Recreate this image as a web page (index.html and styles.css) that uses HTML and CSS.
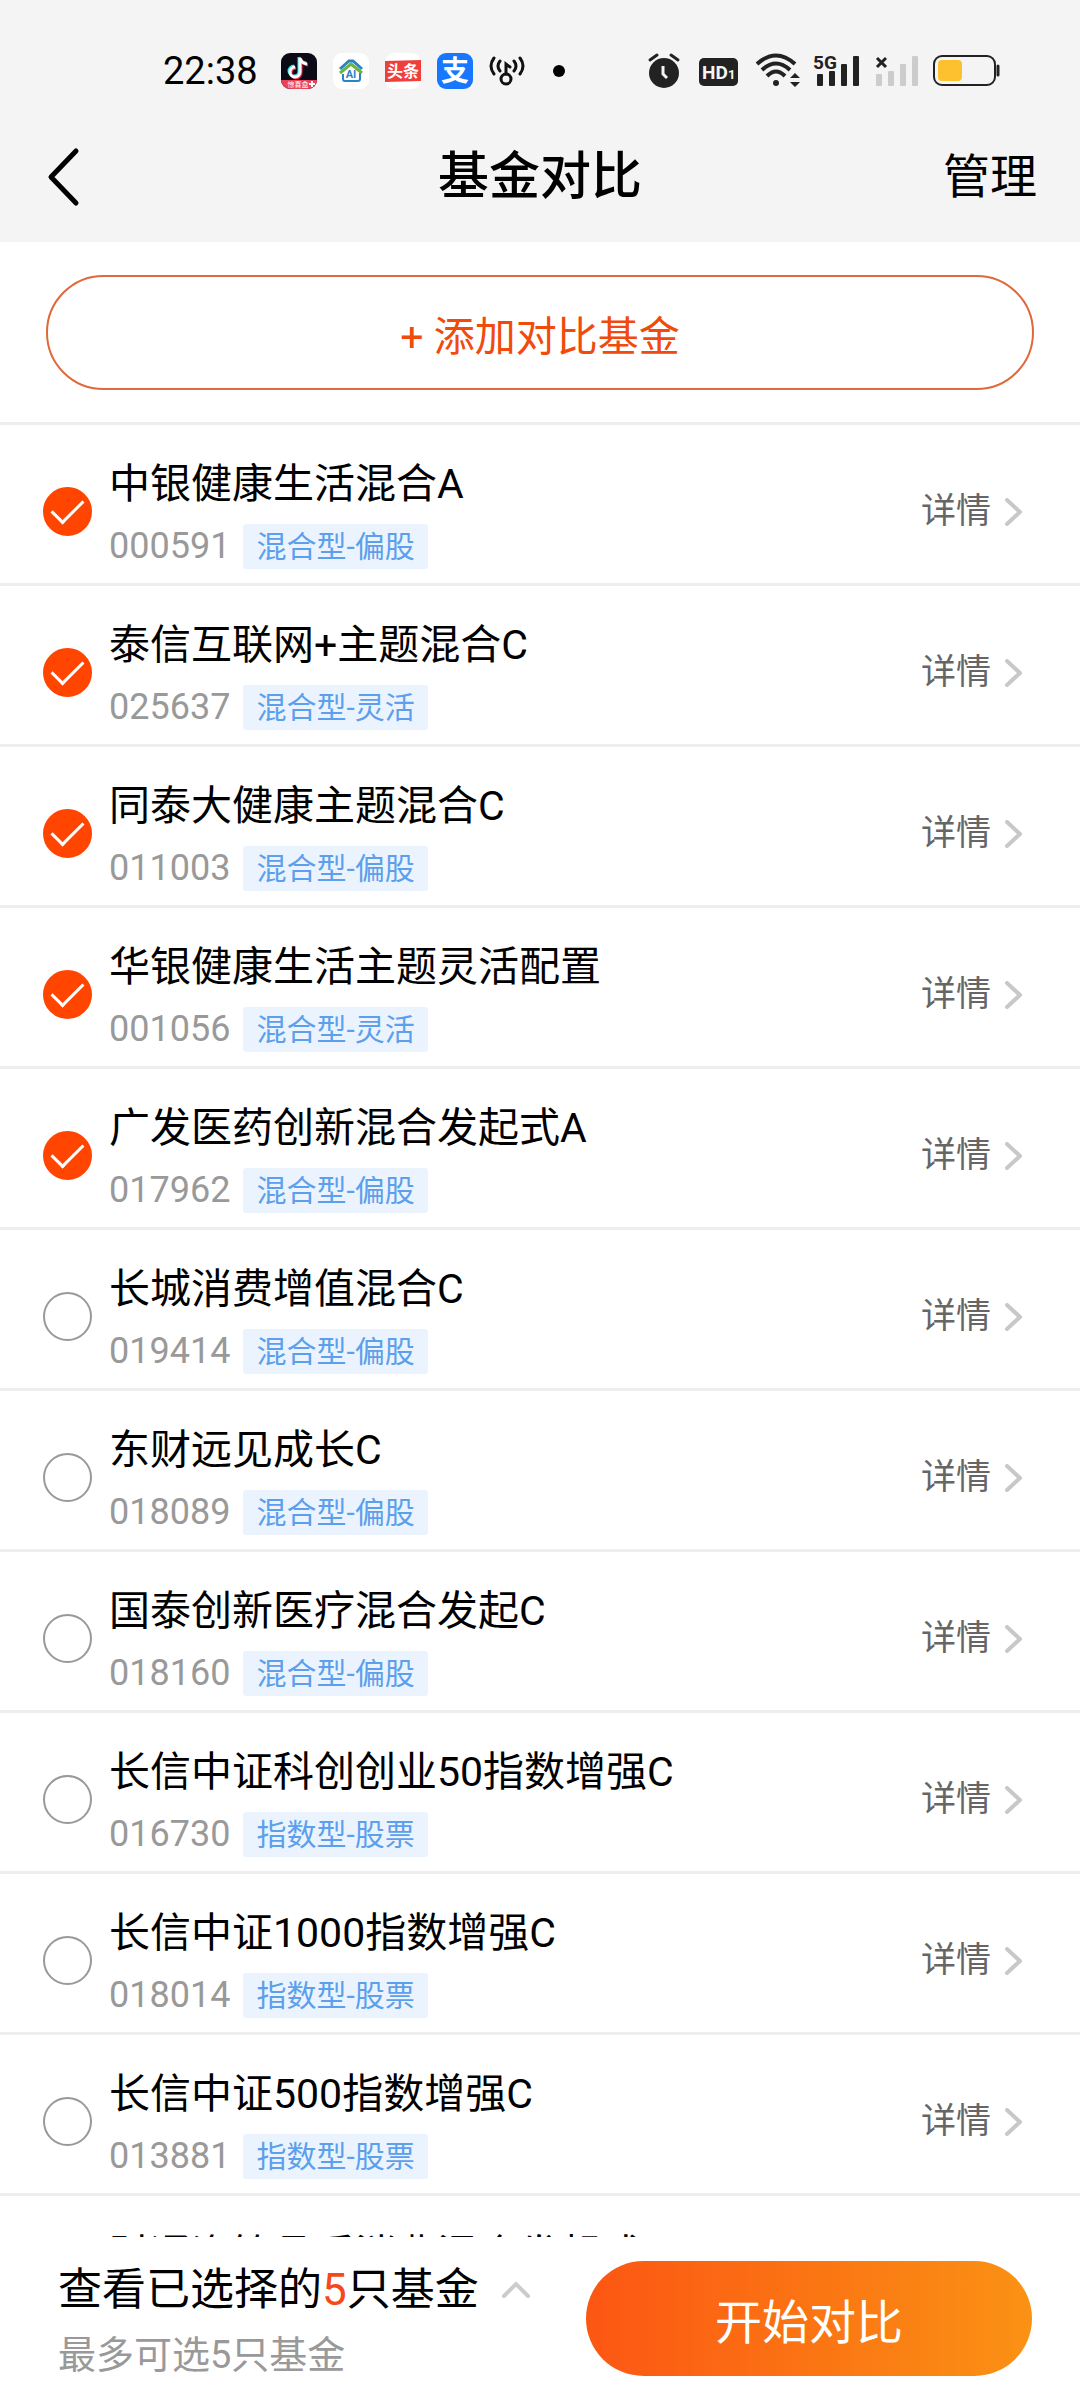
FILE: index.html
```html
<!DOCTYPE html>
<html lang="zh-CN">
<head>
    <meta charset="UTF-8">
    <meta name="viewport" content="width=device-width, initial-scale=1.0">
    <title>基金对比</title>
    <link rel="stylesheet" href="styles.css">
</head>
<body>
    <!-- shared arrow -->
    <svg class="sprite" aria-hidden="true">
        <symbol id="arrow" viewBox="0 0 18 28">
            <path d="M2 2 L15 14 L2 26" fill="none" stroke="#c8c8c8" stroke-width="4" stroke-linecap="round" stroke-linejoin="round"/>
        </symbol>
    </svg>

    <header class="top">
        <div class="status-bar">
            <div class="status-left">
                <span class="clock">22:38</span>
                <svg width="36" height="36" viewBox="0 0 36 36">
                    <clipPath id="app"><rect width="36" height="36" rx="9"/></clipPath>
                    <g clip-path="url(#app)">
                        <rect width="36" height="36" fill="#0c0a17"/>
                        <g fill="none" stroke-width="3">
                            <path d="M18 4 V18 A5 5 0 1 1 13 13 M18 4 Q19 9 25 10" stroke="#25e5e0"/>
                            <path d="M20 6 V20 A5 5 0 1 1 15 15 M20 6 Q21 11 27 12" stroke="#fa2c58"/>
                            <path d="M19 5 V19 A5 5 0 1 1 14 14 M19 5 Q20 10 26 11" stroke="#fff"/>
                        </g>
                        <path d="M0 27 H36 V36 H0 Z" fill="#e8415a"/>
                        <text x="17" y="34" class="ribbon">惊喜盒</text>
                        <path d="M31 28 V34 M28 31 H34" stroke="#fff" stroke-width="2"/>
                    </g>
                </svg>
                <svg width="36" height="36" viewBox="0 0 36 36">
                    <rect width="36" height="36" rx="9" fill="#fff"/>
                    <path d="M7 16 L16 8 L20 8 L29 16" fill="none" stroke="#2b83c6" stroke-width="3"/>
                    <path d="M7 20 L18 11 L29 20" fill="none" stroke="#6cb33f" stroke-width="3"/>
                    <path d="M10 21 V26 Q10 28 12 28 H25 Q27 28 27 26 V20" fill="none" stroke="#2b83c6" stroke-width="2"/>
                    <text x="18" y="25" class="ai">AI</text>
                </svg>
                <svg width="36" height="36" viewBox="0 0 36 36">
                    <rect width="36" height="36" rx="9" fill="#fff"/>
                    <path d="M0 8 L36 7 V28 L0 29 Z" fill="#ee3f3d"/>
                    <text x="18" y="24" class="toutiao">头条</text>
                </svg>
                <svg width="36" height="36" viewBox="0 0 36 36">
                    <rect width="36" height="36" rx="9" fill="#1777ff"/>
                    <text x="18" y="28" class="alipay">支</text>
                </svg>
                <svg width="36" height="36" viewBox="0 0 36 36" fill="none" stroke="#111" stroke-width="3" stroke-linecap="round">
                    <path d="M5 5 Q-1 13 5 21 M11 8 Q7 13 11 18 M31 5 Q37 13 31 21 M25 8 Q29 13 25 18"/>
                    <circle cx="17" cy="26" r="5"/>
                    <path d="M17 21 V11 L21 14"/>
                </svg>
                <svg width="36" height="36" viewBox="0 0 36 36"><circle cx="18" cy="18" r="6" fill="#000"/></svg>
            </div>
            <div class="status-right">
                <svg width="35" height="36" viewBox="0 0 35 36">
                    <circle cx="16" cy="20" r="15" fill="#222"/>
                    <path d="M2 7 L9 2 M30 7 L23 2" stroke="#222" stroke-width="3" stroke-linecap="round"/>
                    <path d="M15 13 V21 L19 25" fill="none" stroke="#f4f4f4" stroke-width="3"/>
                </svg>
                <svg width="41" height="36" viewBox="0 0 41 36">
                    <rect y="5" width="39" height="28" rx="5" fill="#222"/>
                    <text x="3" y="26" class="hd">HD</text>
                    <text x="29" y="26" class="hd-sub">1</text>
                </svg>
                <svg width="42" height="36" viewBox="0 0 42 36">
                    <g fill="none" stroke="#222" stroke-width="4">
                        <path d="M1 11 Q20 -6 39 11"/>
                        <path d="M6 17 Q20 4 34 17"/>
                        <path d="M11 23 Q20 14 29 23"/>
                    </g>
                    <circle cx="20" cy="30" r="3" fill="#222"/>
                    <path d="M34 25 L39 20 L44 25 Z M34 29 L39 34 L44 29 Z" fill="#222"/>
                </svg>
                <svg width="45" height="36" viewBox="0 0 45 36">
                    <text x="-1" y="16" class="net">5G</text>
                    <g fill="#222">
                        <rect x="3" y="21" width="6" height="12" rx="1"/>
                        <rect x="15" y="18" width="6" height="15" rx="1"/>
                        <rect x="27" y="11" width="6" height="22" rx="1"/>
                        <rect x="39" y="3" width="6" height="30" rx="1"/>
                    </g>
                </svg>
                <svg width="42" height="36" viewBox="0 0 42 36">
                    <path d="M2 5 L11 14 M11 5 L2 14" stroke="#222" stroke-width="3"/>
                    <g fill="#ccc">
                        <rect x="1" y="21" width="6" height="12" rx="1"/>
                        <rect x="13" y="18" width="6" height="15" rx="1"/>
                        <rect x="25" y="11" width="6" height="22" rx="1"/>
                        <rect x="37" y="3" width="6" height="30" rx="1"/>
                    </g>
                </svg>
                <svg width="67" height="36" viewBox="0 0 67 36">
                    <rect x="1" y="3" width="61" height="29" rx="8" fill="none" stroke="#222" stroke-width="2"/>
                    <rect x="5" y="7" width="24" height="21" rx="4" fill="#fdc02f"/>
                    <path d="M65 13 V22" stroke="#222" stroke-width="3" stroke-linecap="round"/>
                </svg>
            </div>
        </div>
        <nav class="nav">
            <button class="back" aria-label="返回">
                <svg width="32" height="58" viewBox="0 0 32 58">
                    <path d="M29 3 L4 29 L29 55" fill="none" stroke="#000" stroke-width="5" stroke-linecap="round" stroke-linejoin="round"/>
                </svg>
            </button>
            <h1>基金对比</h1>
            <button class="manage">管理</button>
        </nav>
    </header>

    <main class="content">
        <div class="add-wrap">
            <button class="add">+ 添加对比基金</button>
        </div>
        <ul class="funds">
            <li class="fund">
                <input type="checkbox" id="f1" checked>
                <label for="f1"><span class="name">中银健康生活混合A</span><span class="meta"><span class="code">000591</span><span class="tag">混合型-偏股</span></span></label>
                <a href="#">详情<svg class="arrow"><use href="#arrow"/></svg></a>
            </li>
            <li class="fund">
                <input type="checkbox" id="f2" checked>
                <label for="f2"><span class="name">泰信互联网+主题混合C</span><span class="meta"><span class="code">025637</span><span class="tag">混合型-灵活</span></span></label>
                <a href="#">详情<svg class="arrow"><use href="#arrow"/></svg></a>
            </li>
            <li class="fund">
                <input type="checkbox" id="f3" checked>
                <label for="f3"><span class="name">同泰大健康主题混合C</span><span class="meta"><span class="code">011003</span><span class="tag">混合型-偏股</span></span></label>
                <a href="#">详情<svg class="arrow"><use href="#arrow"/></svg></a>
            </li>
            <li class="fund">
                <input type="checkbox" id="f4" checked>
                <label for="f4"><span class="name">华银健康生活主题灵活配置</span><span class="meta"><span class="code">001056</span><span class="tag">混合型-灵活</span></span></label>
                <a href="#">详情<svg class="arrow"><use href="#arrow"/></svg></a>
            </li>
            <li class="fund">
                <input type="checkbox" id="f5" checked>
                <label for="f5"><span class="name">广发医药创新混合发起式A</span><span class="meta"><span class="code">017962</span><span class="tag">混合型-偏股</span></span></label>
                <a href="#">详情<svg class="arrow"><use href="#arrow"/></svg></a>
            </li>
            <li class="fund">
                <input type="checkbox" id="f6">
                <label for="f6"><span class="name">长城消费增值混合C</span><span class="meta"><span class="code">019414</span><span class="tag">混合型-偏股</span></span></label>
                <a href="#">详情<svg class="arrow"><use href="#arrow"/></svg></a>
            </li>
            <li class="fund">
                <input type="checkbox" id="f7">
                <label for="f7"><span class="name">东财远见成长C</span><span class="meta"><span class="code">018089</span><span class="tag">混合型-偏股</span></span></label>
                <a href="#">详情<svg class="arrow"><use href="#arrow"/></svg></a>
            </li>
            <li class="fund">
                <input type="checkbox" id="f8">
                <label for="f8"><span class="name">国泰创新医疗混合发起C</span><span class="meta"><span class="code">018160</span><span class="tag">混合型-偏股</span></span></label>
                <a href="#">详情<svg class="arrow"><use href="#arrow"/></svg></a>
            </li>
            <li class="fund">
                <input type="checkbox" id="f9">
                <label for="f9"><span class="name">长信中证科创创业50指数增强C</span><span class="meta"><span class="code">016730</span><span class="tag">指数型-股票</span></span></label>
                <a href="#">详情<svg class="arrow"><use href="#arrow"/></svg></a>
            </li>
            <li class="fund">
                <input type="checkbox" id="f10">
                <label for="f10"><span class="name">长信中证1000指数增强C</span><span class="meta"><span class="code">018014</span><span class="tag">指数型-股票</span></span></label>
                <a href="#">详情<svg class="arrow"><use href="#arrow"/></svg></a>
            </li>
            <li class="fund">
                <input type="checkbox" id="f11">
                <label for="f11"><span class="name">长信中证500指数增强C</span><span class="meta"><span class="code">013881</span><span class="tag">指数型-股票</span></span></label>
                <a href="#">详情<svg class="arrow"><use href="#arrow"/></svg></a>
            </li>
            <li class="fund">
                <input type="checkbox" id="f12">
                <label for="f12"><span class="name">财通资管品质消费混合发起式</span></label>
            </li>
        </ul>
    </main>

    <footer class="bottom">
        <div class="summary">
            <button class="selected">查看已选择的<em>5</em>只基金
                <svg width="30" height="18" viewBox="0 0 30 18"><path d="M3 15 L15 3 L27 15" fill="none" stroke="#ccc" stroke-width="4" stroke-linecap="round"/></svg>
            </button>
            <p>最多可选5只基金</p>
        </div>
        <button class="start">开始对比</button>
    </footer>
</body>
</html>
```

FILE: styles.css
```css
* {
    box-sizing: border-box;
}
body {
    margin: 0;
    height: 100vh;
    display: flex;
    flex-direction: column;
    overflow: hidden;
    background: #fff;
    color: #000;
    font-family: Roboto, "Noto Sans CJK SC", sans-serif;
}
button {
    padding: 0;
    border: none;
    background: none;
    color: inherit;
    font-family: inherit;
    cursor: pointer;
}
svg {
    display: block;
    flex: none;
    overflow: visible;
}
.sprite {
    position: absolute;
    width: 0;
    height: 0;
}

/* header */
.top {
    background: #f4f4f4;
}
.status-bar {
    display: flex;
    justify-content: space-between;
    padding: 53px 80px 0 163px;
}
.status-left,
.status-right {
    display: flex;
    align-items: center;
    gap: 16px;
}
.clock {
    width: 102px;
    font-size: 38px;
    line-height: 36px;
}
.ribbon {
    font-size: 7px;
    fill: #fff;
    text-anchor: middle;
}
.ai {
    font-size: 11px;
    font-weight: bold;
    fill: #2b83c6;
    text-anchor: middle;
}
.toutiao {
    font-size: 16px;
    font-weight: bold;
    fill: #fff;
    text-anchor: middle;
}
.alipay {
    font-size: 28px;
    font-weight: bold;
    fill: #fff;
    text-anchor: middle;
}
.hd {
    font-size: 19px;
    font-weight: bold;
    fill: #f4f4f4;
}
.hd-sub {
    font-size: 13px;
    font-weight: bold;
    fill: #f4f4f4;
}
.net {
    font-size: 19px;
    font-weight: bold;
    fill: #222;
}
.nav {
    display: flex;
    align-items: center;
    justify-content: space-between;
    height: 153px;
    padding: 22px 43px 0 47px;
}
.back {
    width: 90px;
}
.nav h1 {
    margin: 0;
    font-size: 51px;
    line-height: 60px;
    font-weight: 500;
}
.manage {
    font-size: 47px;
    line-height: 60px;
}

/* list */
.content {
    flex: 1;
    min-height: 0;
    overflow: hidden;
}
.add-wrap {
    padding: 33px 46px 32px;
}
.add {
    width: 100%;
    height: 115px;
    border: 2px solid #e0683a;
    border-radius: 58px;
    color: #f04a0c;
    font-size: 41px;
}
.funds {
    margin: 0;
    padding: 0;
    list-style: none;
}
.fund {
    display: flex;
    align-items: center;
    padding: 29px 57px 14px 43px;
    border-top: 3px solid #eee;
}
.fund input {
    appearance: none;
    display: grid;
    place-content: center;
    width: 49px;
    height: 49px;
    margin: 0 17px 0 0;
    border: 2px solid #999;
    border-radius: 50%;
}
.fund input:checked {
    border-color: #ff4500;
    background: #ff4500;
}
.fund input:checked::after {
    content: "";
    width: 28px;
    height: 14px;
    margin-bottom: 8px;
    border: solid #fff;
    border-width: 0 0 3px 3px;
    transform: rotate(-45deg);
}
.fund label {
    flex: 1;
    min-height: 115px;
}
.name {
    display: block;
    font-size: 41px;
    line-height: 60px;
}
.meta {
    display: flex;
    align-items: center;
    gap: 13px;
    margin-top: 10px;
}
.code {
    color: #999;
    font-size: 36px;
    line-height: 45px;
}
.tag {
    padding: 0 13px;
    border-radius: 3px;
    background: #ebf4fe;
    color: #5c9fec;
    font-size: 30px;
    line-height: 45px;
}
.fund a {
    display: flex;
    align-items: center;
    gap: 14px;
    color: #666;
    font-size: 35px;
    line-height: 45px;
    text-decoration: none;
}
.arrow {
    width: 18px;
    height: 28px;
}

/* bottom bar */
.bottom {
    display: flex;
    align-items: center;
    justify-content: space-between;
    height: 163px;
    padding: 0 48px 0 58px;
    background: #fff;
}
.summary {
    padding-top: 5px;
}
.selected {
    display: flex;
    align-items: center;
    font-size: 44px;
    line-height: 64px;
}
.selected em {
    color: #f5481c;
    font-style: normal;
}
.selected svg {
    margin-left: 22px;
}
.summary p {
    margin: 3px 0 0;
    color: #999;
    font-size: 38px;
    line-height: 60px;
}
.start {
    width: 446px;
    height: 115px;
    border-radius: 58px;
    background: linear-gradient(to right, #fc5613, #fa9214);
    color: #fff;
    font-size: 47px;
}
```
